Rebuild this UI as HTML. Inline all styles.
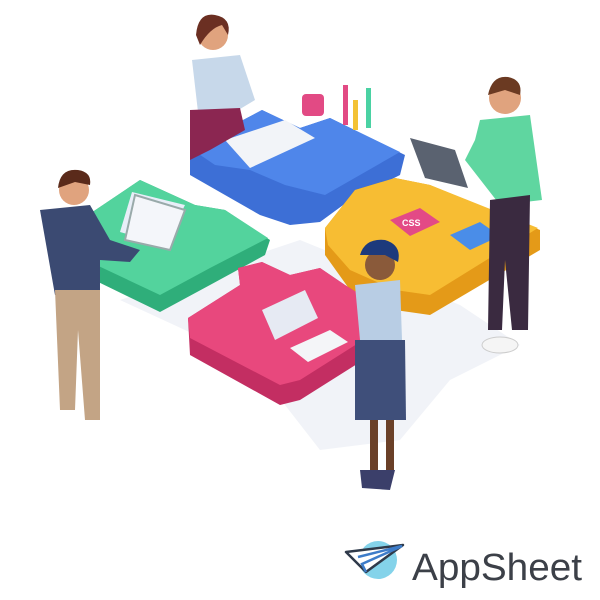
<!DOCTYPE html>
<html><head><style>
html,body{margin:0;padding:0;background:#fff;width:600px;height:600px;overflow:hidden}
</style></head><body>
<svg width="600" height="600" viewBox="0 0 600 600" xmlns="http://www.w3.org/2000/svg">
<!-- faint shadow pieces -->
<polygon points="120,300 250,360 320,450 400,440 450,380 520,345 460,305 300,240" fill="#f1f3f8"/>
<!-- blue piece -->
<polygon points="190,148 262,110 300,128 330,118 405,155 400,175 350,200 320,222 290,225 260,215 225,195 190,175" fill="#3d6fd6"/>
<polygon points="190,148 262,110 300,128 330,118 400,152 325,195 285,185 250,170 215,165" fill="#4f86ea"/>
<polygon points="225,140 285,120 315,138 250,168" fill="#f2f4f8"/>
<!-- green piece -->
<polygon points="88,215 140,180 195,205 225,210 270,240 265,255 210,285 160,312 90,278" fill="#2fae7a"/>
<polygon points="88,215 140,180 195,205 225,210 268,238 210,268 160,295 90,262" fill="#53d39d"/>
<polygon points="132,192 185,205 165,245 120,232" fill="#e8eef8"/>
<!-- yellow piece -->
<polygon points="325,228 355,190 395,178 430,185 540,230 540,250 430,315 395,310 350,290 325,255" fill="#e49a18"/>
<polygon points="325,228 355,190 395,178 430,185 538,228 430,295 395,290 350,270 328,245" fill="#f7bd33"/>
<polygon points="390,220 420,208 440,222 410,236" fill="#e34a86"/>
<polygon points="450,235 480,222 500,236 470,250" fill="#4a8de8"/>
<text x="402" y="226" font-family="Liberation Sans,sans-serif" font-size="9" fill="#fff" font-weight="bold">CSS</text>
<!-- pink piece -->
<polygon points="188,318 240,285 238,268 262,262 290,275 320,268 345,285 400,320 395,340 300,400 280,405 190,355" fill="#c32e62"/>
<polygon points="188,318 240,285 238,268 262,262 290,275 320,268 345,285 398,318 300,380 280,385 190,338" fill="#e8487d"/>
<polygon points="262,310 305,290 318,318 275,340" fill="#e6eaf3"/>
<polygon points="290,348 330,330 348,342 308,362" fill="#f4f5f8"/>
<!-- top woman -->
<circle cx="213" cy="35" r="15" fill="#e0a37e"/>
<path d="M196,35 Q198,12 215,15 Q232,18 228,35 L222,25 Q210,28 200,45Z" fill="#6b2f22"/>
<polygon points="192,60 240,55 255,100 235,112 198,112" fill="#c7d8ea"/>
<polygon points="190,110 240,108 245,130 210,150 190,160" fill="#8b2651"/>
<rect x="302" y="94" width="22" height="22" rx="4" fill="#e24a84"/>
<rect x="343" y="85" width="5" height="40" fill="#e24a84"/>
<rect x="353" y="100" width="5" height="30" fill="#f3c235"/>
<rect x="366" y="88" width="5" height="40" fill="#4ad2a3"/>
<!-- left man -->
<circle cx="74" cy="190" r="15" fill="#e0a37e"/>
<path d="M58,188 Q60,168 78,170 Q92,172 90,185 L75,182 Z" fill="#5a2a1a"/>
<polygon points="40,210 90,205 110,240 140,250 130,262 100,260 100,290 55,295" fill="#3b4a72"/>
<polygon points="55,290 100,290 100,420 85,420 78,330 75,410 60,410" fill="#c3a485"/>
<polygon points="135,195 185,210 170,250 125,240" fill="#f4f6fa" stroke="#9aa" stroke-width="2"/>
<!-- right man -->
<circle cx="505" cy="98" r="16" fill="#e0a37e"/>
<path d="M488,95 Q492,75 508,77 Q523,80 520,95 L505,90Z" fill="#6b3a22"/>
<polygon points="480,120 530,115 542,200 500,205 465,160 475,140" fill="#5fd6a0"/>
<polygon points="490,200 530,195 528,330 512,330 505,260 502,330 488,330" fill="#3a2a40"/>
<polygon points="410,138 455,150 468,188 425,178" fill="#5a6270"/>
<ellipse cx="500" cy="345" rx="18" ry="8" fill="#f5f5f5" stroke="#ccc"/>
<!-- bottom woman -->
<circle cx="380" cy="265" r="15" fill="#8a5a3a"/>
<path d="M360,255 Q365,238 385,240 Q402,245 398,262 L385,255Z" fill="#1d3a7c"/>
<polygon points="355,285 400,280 402,340 360,340" fill="#b8cde4"/>
<polygon points="355,340 405,340 406,420 355,420" fill="#3f4f7a"/>
<rect x="370" y="420" width="8" height="50" fill="#6a4028"/>
<rect x="386" y="420" width="8" height="50" fill="#6a4028"/>
<polygon points="360,470 395,470 390,490 362,488" fill="#3b3f6a"/>
<!-- logo -->
<circle cx="378" cy="560" r="19" fill="#84d3ea"/>
<polygon points="346,552 403,545 366,572" fill="#fff" stroke="#2f3a4a" stroke-width="2.5" stroke-linejoin="round"/>
<polyline points="358,557 402,546 362,564 366,572" fill="none" stroke="#3d7cc9" stroke-width="2.5"/>
<text x="412" y="580" font-family="Liberation Sans,sans-serif" font-size="38" fill="#3c4048" textLength="170" lengthAdjust="spacingAndGlyphs">AppSheet</text>
</svg>
</body></html>
